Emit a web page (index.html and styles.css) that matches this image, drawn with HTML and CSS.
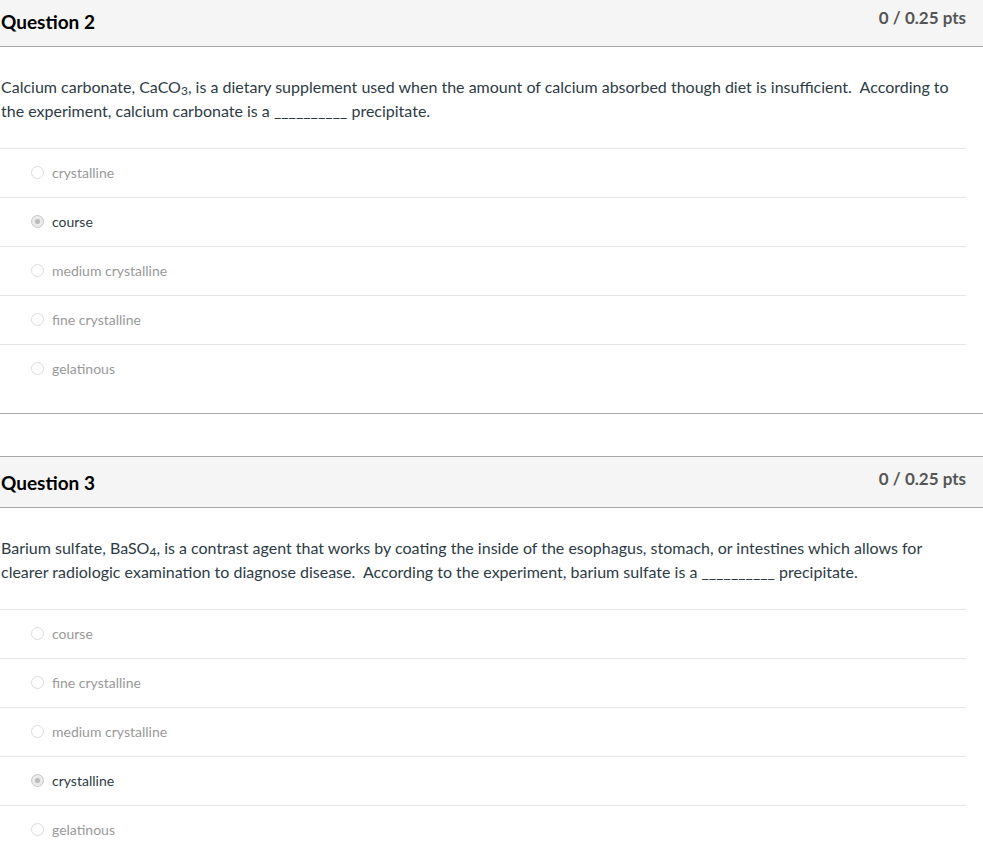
FILE: index.html
```html
<!DOCTYPE html>
<html>
<head>
<meta charset="utf-8">
<link rel="stylesheet" href="styles.css">
</head>
<body>
<div class="page">
  <div class="question">
    <div class="q-header">
      <span class="q-title">Question 2</span>
      <span class="q-pts">0 / 0.25 pts</span>
    </div>
    <div class="q-text">Calcium carbonate, CaCO<sub>3</sub>, is a dietary supplement used when the amount of calcium absorbed though diet is insufficient.&nbsp; According to the experiment, calcium carbonate is a __________ precipitate.</div>
    <div class="answers">
      <div class="answer"><span class="radio"></span><span class="label">crystalline</span></div>
      <div class="answer selected"><span class="radio"></span><span class="label">course</span></div>
      <div class="answer"><span class="radio"></span><span class="label">medium crystalline</span></div>
      <div class="answer"><span class="radio"></span><span class="label">fine crystalline</span></div>
      <div class="answer"><span class="radio"></span><span class="label">gelatinous</span></div>
    </div>
  </div>
  <div class="question">
    <div class="q-header">
      <span class="q-title">Question 3</span>
      <span class="q-pts">0 / 0.25 pts</span>
    </div>
    <div class="q-text">Barium sulfate, BaSO<sub>4</sub>, is a contrast agent that works by coating the inside of the esophagus, stomach, or intestines which allows for clearer radiologic examination to diagnose disease.&nbsp; According to the experiment, barium sulfate is a __________ precipitate.</div>
    <div class="answers">
      <div class="answer"><span class="radio"></span><span class="label">course</span></div>
      <div class="answer"><span class="radio"></span><span class="label">fine crystalline</span></div>
      <div class="answer"><span class="radio"></span><span class="label">medium crystalline</span></div>
      <div class="answer selected"><span class="radio"></span><span class="label">crystalline</span></div>
      <div class="answer"><span class="radio"></span><span class="label">gelatinous</span></div>
    </div>
  </div>
</div>
</body>
</html>
```
FILE: styles.css
```css
html, body {
  margin: 0;
  padding: 0;
  background: #fff;
}
body {
  font-family: Lato, "Open Sans", sans-serif;
  color: #2d3b45;
}
.page {
  margin-top: -5px;
}
.question {
  border-bottom: 1px solid #aaaaaa;
  margin-bottom: 42px;
}
.q-header {
  display: flex;
  justify-content: space-between;
  align-items: center;
  height: 50px;
  background: #f5f5f5;
  border-top: 1px solid #aaaaaa;
  border-bottom: 1px solid #aaaaaa;
  padding: 0 17px 0 1px;
}
.q-title {
  font-weight: 700;
  font-size: 19px;
  color: #000;
}
.q-pts {
  font-weight: 700;
  font-size: 17px;
  color: #555;
  margin-top: -7px;
}
.q-text {
  width: 966px;
  font-size: 16px;
  line-height: 24px;
  padding: 28px 0 25px 1px;
  box-sizing: border-box;
  color: #2d3b45;
}
.q-text sub {
  font-size: 12px;
  vertical-align: -2px;
  line-height: 1;
}
.answers {
  width: 966px;
  padding-bottom: 20px;
}
.answer {
  display: flex;
  align-items: center;
  height: 48px;
  box-sizing: content-box;
  border-top: 1px solid #e6e6e6;
  padding-left: 31px;
  font-size: 14px;
  color: #999;
}
.label {
  margin-top: -2px;
}
.radio {
  width: 11px;
  height: 11px;
  border: 1px solid #dcdcdc;
  border-radius: 50%;
  background: #fff;
  margin-right: 8px;
  margin-top: -2px;
  box-sizing: content-box;
  position: relative;
}
.answer.selected {
  color: #2d3b45;
}
.answer.selected .radio {
  border-color: #c8c8c8;
  background: #eaeaea;
}
.answer.selected .radio::after {
  content: "";
  position: absolute;
  left: 3px;
  top: 3px;
  width: 5px;
  height: 5px;
  border-radius: 50%;
  background: #bbb;
}
```
